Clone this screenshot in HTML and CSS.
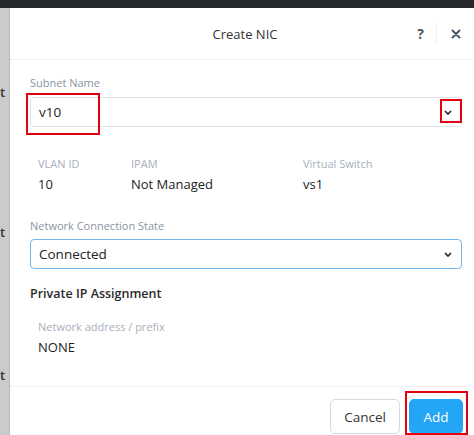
FILE: index.html
```html
<!DOCTYPE html>
<html>
<head>
<meta charset="utf-8">
<link rel="stylesheet" href="styles.css">
</head>
<body>
<div class="page">
  <div class="topbar"></div>
  <div class="side">
    <span class="side-t t1">t</span>
    <span class="side-t t2">t</span>
    <span class="side-t t3">t</span>
  </div>
  <div class="modal">
    <div class="modal-header">
      <div class="title">Create NIC</div>
      <div class="header-actions">
        <span class="help">?</span>
        <span class="divider"></span>
        <svg class="close" width="10" height="10" viewBox="0 0 10 10"><path d="M1.5 1.5 L8.5 8.5 M8.5 1.5 L1.5 8.5" stroke="#4a5566" stroke-width="2" stroke-linecap="round"/></svg>
      </div>
    </div>
    <div class="modal-body">
      <div class="label">Subnet Name</div>
      <div class="select subnet">
        <span class="value">v10</span>
        <svg class="chev" width="8" height="5" viewBox="0 0 8 5"><path d="M1 1 L4 4 L7 1" fill="none" stroke="#222" stroke-width="1.6"/></svg>
        <span class="mark mark-value"></span>
        <span class="mark mark-chev"></span>
      </div>
      <div class="info">
        <div class="info-label">VLAN ID</div>
        <div class="info-label">IPAM</div>
        <div class="info-label">Virtual Switch</div>
        <div class="info-value">10</div>
        <div class="info-value">Not Managed</div>
        <div class="info-value">vs1</div>
      </div>
      <div class="label">Network Connection State</div>
      <div class="select active">
        <span class="value">Connected</span>
        <svg class="chev" width="8" height="5" viewBox="0 0 8 5"><path d="M1 1 L4 4 L7 1" fill="none" stroke="#222" stroke-width="1.6"/></svg>
      </div>
      <div class="section">Private IP Assignment</div>
      <div class="ip">
        <div class="info-label">Network address / prefix</div>
        <div class="info-value">NONE</div>
      </div>
    </div>
    <div class="modal-footer">
      <button class="btn cancel">Cancel</button>
      <div class="add-wrap">
        <button class="btn add">Add</button>
      </div>
    </div>
  </div>
</div>
</body>
</html>
```
FILE: styles.css
```css
*, *::before, *::after { box-sizing: border-box; }
html, body { margin: 0; padding: 0; }
body {
  width: 474px;
  height: 435px;
  overflow: hidden;
  font-family: "Open Sans", "Liberation Sans", sans-serif;
  color: #222;
  background: #fff;
}
.page {
  display: grid;
  grid-template-columns: 10px 1fr;
  grid-template-rows: 8px 1fr;
  height: 435px;
}
.topbar {
  grid-column: 1 / 3;
  background: #26292e;
}
.side {
  background: #cbcbcb;
  display: flex;
  flex-direction: column;
  border-right: 1px solid #b8b8b8;
  overflow: hidden;
}
.side-t {
  font-size: 13px;
  font-weight: 600;
  line-height: 14px;
  color: #333;
  padding-left: 0;
}
.t1 { margin-top: 77px; }
.t2 { margin-top: 126px; }
.t3 { margin-top: 129px; }
.modal {
  background: #fff;
  border-top-left-radius: 6px;
  display: flex;
  flex-direction: column;
}
.modal-header {
  height: 52px;
  border-bottom: 1px solid #eef0f2;
  display: flex;
  align-items: center;
  justify-content: center;
  position: relative;
}
.title {
  font-size: 13px;
  color: #333;
  margin-left: 6px;
}
.header-actions {
  position: absolute;
  right: 0;
  top: 0;
  height: 51px;
  display: flex;
  align-items: center;
}
.help {
  font-size: 14px;
  font-weight: 700;
  color: #4a5566;
  margin-right: 12px;
}
.divider {
  width: 1px;
  height: 22px;
  background: #eef0f2;
  margin-right: 14px;
}
.close { margin-right: 13px; }
.modal-body {
  padding: 16px 12px 0 20px;
  flex: 1;
}
.label {
  font-size: 11px;
  line-height: 14px;
  color: #8a94a3;
}
.select {
  margin-top: 7px;
  height: 30px;
  border: 1px solid #dfe2e6;
  border-radius: 4px;
  display: flex;
  align-items: center;
  justify-content: space-between;
  padding: 0 9px 0 8px;
  position: relative;
}
.select .value {
  font-size: 13.5px;
  color: #222;
}
.select.active {
  border-color: #71b9ee;
  margin-top: 6px;
}
.mark {
  position: absolute;
  border: 2px solid #e3000f;
}
.mark-value {
  left: -5px;
  top: -5px;
  width: 74px;
  height: 42px;
}
.mark-chev {
  right: -1px;
  top: 1px;
  width: 22px;
  height: 24px;
}
.info {
  display: grid;
  grid-template-columns: 93px 172px 1fr;
  padding-left: 8px;
  margin-top: 30px;
  row-gap: 4px;
}
.info-label {
  font-size: 11px;
  line-height: 14px;
  color: #a7afba;
}
.info-value {
  font-size: 13px;
  line-height: 18px;
  color: #222;
}
.info + .label { margin-top: 26px; }
.section {
  margin-top: 16px;
  font-size: 12.5px;
  font-weight: 600;
  line-height: 18px;
  color: #2a2a2a;
}
.ip {
  margin-top: 17px;
  padding-left: 8px;
  display: flex;
  flex-direction: column;
  gap: 4px;
}
.modal-footer {
  border-top: 1px solid #eef0f2;
  display: flex;
  justify-content: flex-end;
  align-items: flex-start;
  gap: 9px;
  padding: 12px 11px 0 0;
  height: 49px;
}
.btn {
  font-family: inherit;
  font-size: 13.5px;
  height: 35px;
  border-radius: 5px;
  padding: 0;
}
.cancel {
  width: 70px;
  background: #fff;
  border: 1px solid #d6d9de;
  color: #333;
}
.add-wrap {
  position: relative;
  display: flex;
}
.add-wrap::after {
  content: "";
  position: absolute;
  left: -4px;
  top: -8px;
  width: 63px;
  height: 44px;
  border: 2px solid #e3000f;
}
.add {
  width: 54px;
  background: #22a6f5;
  border: 1px solid #22a6f5;
  color: #fff;
}
```
